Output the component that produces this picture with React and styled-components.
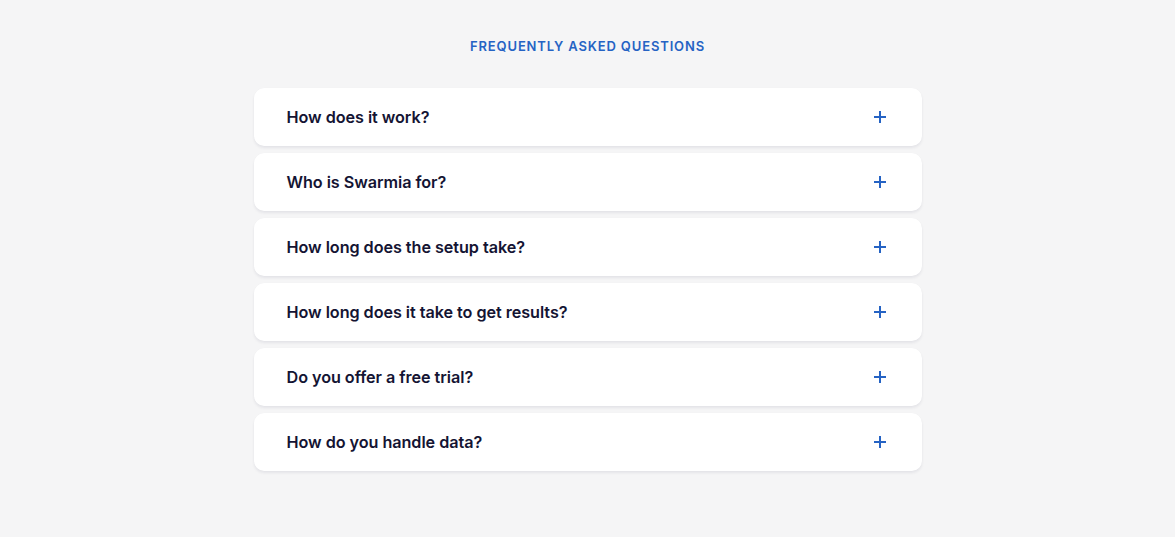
import styled, { createGlobalStyle } from "styled-components";

const GlobalStyle = createGlobalStyle`
  body {
    margin: 0;
    background: #f5f5f6;
    font-family: Inter, "Noto Sans", sans-serif;
  }
`;

const Section = styled.section`
  display: flex;
  flex-direction: column;
  align-items: center;
  padding-top: 38px;
  min-height: 537px;
  box-sizing: border-box;
`;

const Eyebrow = styled.h2`
  margin: 0 0 34px;
  font-size: 13px;
  font-weight: 600;
  letter-spacing: 0.85px;
  color: #2563c4;
  line-height: 16px;
`;

const List = styled.div`
  width: 668px;
  display: flex;
  flex-direction: column;
  gap: 7px;
`;

const Item = styled.button`
  display: flex;
  align-items: center;
  justify-content: space-between;
  height: 58px;
  padding: 0 35px 0 33px;
  border: none;
  border-radius: 10px;
  background: #fff;
  box-shadow: 0 2px 3px rgba(20, 20, 50, 0.07), 0 0 1px rgba(20, 20, 50, 0.04);
  cursor: pointer;
  font-family: inherit;
  text-align: left;
`;

const Question = styled.span`
  font-size: 16.2px;
  font-weight: 600;
  color: #141433;
  letter-spacing: -0.05px;
`;

const Plus = () => (
  <svg width="14" height="14" viewBox="0 0 14 14" fill="none">
    <path d="M7 1v12M1 7h12" stroke="#2563c4" strokeWidth="2" />
  </svg>
);

const questions = [
  "How does it work?",
  "Who is Swarmia for?",
  "How long does the setup take?",
  "How long does it take to get results?",
  "Do you offer a free trial?",
  "How do you handle data?",
];

export default function App() {
  return (
    <>
      <GlobalStyle />
      <Section>
        <Eyebrow>FREQUENTLY ASKED QUESTIONS</Eyebrow>
        <List>
          {questions.map((q) => (
            <Item key={q}>
              <Question>{q}</Question>
              <Plus />
            </Item>
          ))}
        </List>
      </Section>
    </>
  );
}
